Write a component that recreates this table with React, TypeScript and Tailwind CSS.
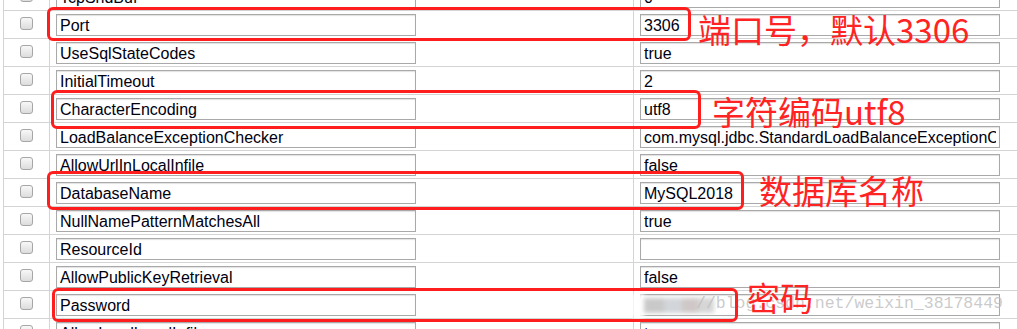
const ROWS: [string, string][] = [
  ['TcpSndBuf', '0'],
  ['Port', '3306'],
  ['UseSqlStateCodes', 'true'],
  ['InitialTimeout', '2'],
  ['CharacterEncoding', 'utf8'],
  ['LoadBalanceExceptionChecker', 'com.mysql.jdbc.StandardLoadBalanceExceptionChecker'],
  ['AllowUrlInLocalInfile', 'false'],
  ['DatabaseName', 'MySQL2018'],
  ['NullNamePatternMatchesAll', 'true'],
  ['ResourceId', ''],
  ['AllowPublicKeyRetrieval', 'false'],
  ['Password', ''],
  ['AllowLoadLocalInfile', 'true'],
]

function Field({ value }: { value: string }) {
  return (
    <input
      readOnly
      value={value}
      className="h-[22px] w-[360px] border border-[#a9a9a9] bg-white px-[3px] pt-[2px] text-[16px] text-[#000010] shadow-[inset_0_1px_1px_rgba(0,0,0,0.12)] outline-none"
    />
  )
}

function Row({ name, value }: { name: string; value: string }) {
  return (
    <div className="flex h-[28px] border-b border-[#d4d4d4]">
      <div className="flex w-[46px] shrink-0 justify-center border-r border-[#d4d4d4]">
        <div className="mt-[6px] h-[13px] w-[13px] rounded-[3px] border border-[#a6a6a6] bg-gradient-to-b from-[#f8f8f8] to-[#dcdcdc]" />
      </div>
      <div className="w-[584px] shrink-0 border-r border-[#d4d4d4] pl-[6px] pt-[3px]">
        <Field value={name} />
      </div>
      <div className="flex-1 pl-[6px] pt-[3px]">
        <Field value={value} />
      </div>
    </div>
  )
}

const redBox = 'absolute rounded-[6px] border-[3px] border-[#ff1e1e]'
const note =
  "absolute whitespace-nowrap text-[33px] leading-none text-[#ff2323] font-['Noto_Sans_CJK_SC',sans-serif]"

export default function App() {
  return (
    <div className="relative h-[329px] w-[1017px] overflow-hidden bg-white font-['Liberation_Sans',Arial,sans-serif]">
      <div className="-mt-[17px] ml-[3px] border-l border-[#d4d4d4]">
        {ROWS.map(([n, v]) => (
          <Row key={n} name={n} value={v} />
        ))}
      </div>

      {/* blurred password value */}
      <div className="absolute left-[632px] top-[294px] flex h-[24px] w-[92px] blur-[2px]">
        <div className="w-[12px] bg-white" />
        <div className="mt-[4px] h-[15px] w-[20px] bg-[#c9c9c9]" />
        <div className="mt-[4px] h-[15px] w-[18px] bg-[#d2d5d9]" />
        <div className="mt-[4px] h-[15px] w-[16px] bg-[#d0c8c8]" />
        <div className="mt-[4px] h-[15px] w-[16px] bg-[#d6d6d6]" />
      </div>

      {/* watermark */}
      <div className="absolute left-[696px] top-[296px] whitespace-nowrap font-['Liberation_Mono',monospace] text-[16.5px] leading-none text-[#bdbdbd]/80">
        //blog.csdn.net/weixin_38178449
      </div>

      <div className={`${redBox} left-[47px] top-[7px] h-[34px] w-[644px]`} />
      <div className={`${redBox} left-[51px] top-[90px] h-[39px] w-[650px]`} />
      <div className={`${redBox} left-[47px] top-[171px] h-[39px] w-[697px]`} />
      <div className={`${redBox} left-[52px] top-[288px] h-[34px] w-[686px]`} />

      <div className={`${note} left-[698px] top-[13px]`}>端口号，默认3306</div>
      <div className={`${note} left-[712px] top-[95px]`}>字符编码utf8</div>
      <div className={`${note} left-[759px] top-[174px]`}>数据库名称</div>
      <div className={`${note} left-[747px] top-[281px]`}>密码</div>
    </div>
  )
}
